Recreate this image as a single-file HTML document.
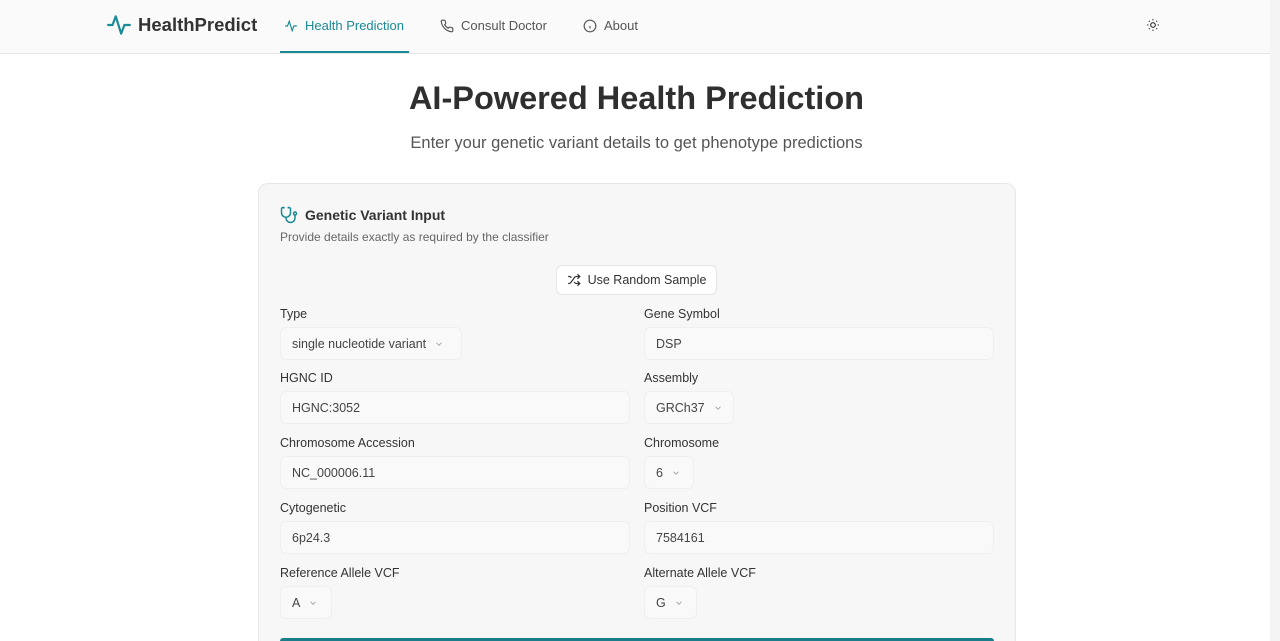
<!DOCTYPE html>
<html><head><meta charset="utf-8"><style>
*{box-sizing:border-box;margin:0;padding:0}
html{width:1280px;height:641px;overflow:hidden}
body{width:1280px;height:641px;overflow:hidden;background:#fff;font-family:"Liberation Sans",sans-serif;color:#333;position:relative}
.hdr{position:absolute;left:0;top:0;width:1280px;height:54px;background:#fafafa;border-bottom:1px solid #e6e6e6}
.logo{position:absolute;left:106px;top:12px;display:flex;align-items:center;gap:6px;font-weight:bold;font-size:18.5px;color:#333}
.nav{position:absolute;top:18px;font-size:13px;color:#555;display:flex;align-items:center;gap:7px}
.act{color:#1a8a96}
.uline{position:absolute;left:280px;top:51px;width:129px;height:2px;background:#1a8a96}
h1{position:absolute;left:0;width:1273px;top:80px;text-align:center;font-size:32.5px;font-weight:bold;color:#2f2f2f}
.sub{position:absolute;left:0;width:1273px;top:134px;text-align:center;font-size:16.5px;color:#555}
.card{position:absolute;left:258px;top:183px;width:758px;height:458px;background:#f7f7f7;border:1px solid #e6e6e6;border-bottom:none;border-radius:10px 10px 0 0}
.ct{position:absolute;left:280px;top:206px;display:flex;align-items:center;gap:7px;font-size:14px;font-weight:bold;color:#333}
.cs{position:absolute;left:280px;top:230px;font-size:12px;color:#666}
.btn{position:absolute;left:556px;top:265px;width:161px;height:30px;background:#fff;border:1px solid #e6e6e6;border-radius:6px;font-size:12.5px;color:#333;display:flex;align-items:center;justify-content:center;gap:7px}
.lbl{position:absolute;font-size:12.5px;color:#333}
.in{position:absolute;height:33px;background:#f9f9f9;border:1px solid #efefef;border-radius:6px;font-size:12.5px;color:#444;padding-left:11px;display:flex;align-items:center}
.in svg{margin-left:8px}
.sb{position:absolute;left:1270px;top:0;width:10px;height:641px;background:#f4f4f4}
.go{position:absolute;left:280px;top:638px;width:714px;height:3px;background:#1a7d87;border-radius:6px 6px 0 0}
</style></head><body>
<div class="hdr"></div>
<div class="logo"><svg width="26" height="26" viewBox="0 0 24 24" fill="none" stroke="#1a8a96" stroke-width="2" stroke-linecap="round" stroke-linejoin="round"><path d="M2 12h4l3-8 5 16 3-8h5"/></svg>HealthPredict</div>
<div class="nav act" style="left:284px"><svg width="14" height="14" viewBox="0 0 24 24" fill="none" stroke="#1a8a96" stroke-width="2"><path d="M2 12h4l3-8 5 16 3-8h5"/></svg>Health Prediction</div>
<div class="uline"></div>
<div class="nav" style="left:440px"><svg width="14" height="14" viewBox="0 0 24 24" fill="none" stroke="#555" stroke-width="2"><path d="M22 16.9v3a2 2 0 0 1-2.2 2 19.8 19.8 0 0 1-8.6-3.1 19.5 19.5 0 0 1-6-6A19.8 19.8 0 0 1 2.1 4.2 2 2 0 0 1 4.1 2h3a2 2 0 0 1 2 1.7c.1.9.4 1.8.7 2.7a2 2 0 0 1-.5 2.1L8 9.8a16 16 0 0 0 6 6l1.3-1.3a2 2 0 0 1 2.1-.4c.9.3 1.8.6 2.7.7a2 2 0 0 1 1.7 2z"/></svg>Consult Doctor</div>
<div class="nav" style="left:583px"><svg width="14" height="14" viewBox="0 0 24 24" fill="none" stroke="#555" stroke-width="2"><circle cx="12" cy="12" r="10"/><path d="M12 16v-4M12 8h.01"/></svg>About</div>
<svg style="position:absolute;left:1146px;top:18px" width="14" height="14" viewBox="0 0 24 24" fill="none" stroke="#333" stroke-width="2"><circle cx="12" cy="12" r="4"/><path d="M12 2v2M12 20v2M4.9 4.9l1.4 1.4M17.7 17.7l1.4 1.4M2 12h2M20 12h2M6.3 17.7l-1.4 1.4M19.1 4.9l-1.4 1.4"/></svg>
<h1>AI-Powered Health Prediction</h1>
<div class="sub">Enter your genetic variant details to get phenotype predictions</div>
<div class="card"></div>
<div class="ct"><svg width="18" height="18" viewBox="0 0 24 24" fill="none" stroke="#1a8a96" stroke-width="2" stroke-linecap="round"><path d="M4.8 2.3A.3.3 0 1 0 5 2H4a2 2 0 0 0-2 2v5a6 6 0 0 0 6 6 6 6 0 0 0 6-6V4a2 2 0 0 0-2-2h-1a.2.2 0 1 0 .3.3"/><path d="M8 15v1a6 6 0 0 0 6 6 6 6 0 0 0 6-6v-4"/><circle cx="20" cy="10" r="2"/></svg>Genetic Variant Input</div>
<div class="cs">Provide details exactly as required by the classifier</div>
<div class="btn"><svg width="14" height="14" viewBox="0 0 24 24" fill="none" stroke="#333" stroke-width="2"><path d="M2 18h1.4c1.3 0 2.5-.6 3.3-1.7l6.1-8.6c.7-1.1 2-1.7 3.3-1.7H22M18 2l4 4-4 4M2 6h1.9c1.5 0 2.9.9 3.6 2.2M22 18h-5.9c-1.3 0-2.6-.7-3.3-1.8l-.5-.8M18 14l4 4-4 4"/></svg>Use Random Sample</div>

<div class="lbl" style="left:280px;top:307px">Type</div>
<div class="in" style="left:280px;top:327px;width:182px">single nucleotide variant<svg width="10" height="10" viewBox="0 0 24 24" fill="none" stroke="#999" stroke-width="2"><path d="M6 9l6 6 6-6"/></svg></div>
<div class="lbl" style="left:644px;top:307px">Gene Symbol</div>
<div class="in" style="left:644px;top:327px;width:350px">DSP</div>

<div class="lbl" style="left:280px;top:371px">HGNC ID</div>
<div class="in" style="left:280px;top:391px;width:350px">HGNC:3052</div>
<div class="lbl" style="left:644px;top:371px">Assembly</div>
<div class="in" style="left:644px;top:391px;width:90px">GRCh37<svg width="10" height="10" viewBox="0 0 24 24" fill="none" stroke="#999" stroke-width="2"><path d="M6 9l6 6 6-6"/></svg></div>

<div class="lbl" style="left:280px;top:436px">Chromosome Accession</div>
<div class="in" style="left:280px;top:456px;width:350px">NC_000006.11</div>
<div class="lbl" style="left:644px;top:436px">Chromosome</div>
<div class="in" style="left:644px;top:456px;width:50px">6<svg width="10" height="10" viewBox="0 0 24 24" fill="none" stroke="#999" stroke-width="2"><path d="M6 9l6 6 6-6"/></svg></div>

<div class="lbl" style="left:280px;top:501px">Cytogenetic</div>
<div class="in" style="left:280px;top:521px;width:350px">6p24.3</div>
<div class="lbl" style="left:644px;top:501px">Position VCF</div>
<div class="in" style="left:644px;top:521px;width:350px">7584161</div>

<div class="lbl" style="left:280px;top:566px">Reference Allele VCF</div>
<div class="in" style="left:280px;top:586px;width:52px">A<svg width="10" height="10" viewBox="0 0 24 24" fill="none" stroke="#999" stroke-width="2"><path d="M6 9l6 6 6-6"/></svg></div>
<div class="lbl" style="left:644px;top:566px">Alternate Allele VCF</div>
<div class="in" style="left:644px;top:586px;width:53px">G<svg width="10" height="10" viewBox="0 0 24 24" fill="none" stroke="#999" stroke-width="2"><path d="M6 9l6 6 6-6"/></svg></div>
<div class="go"></div>
<div class="sb"></div>
</body></html>
